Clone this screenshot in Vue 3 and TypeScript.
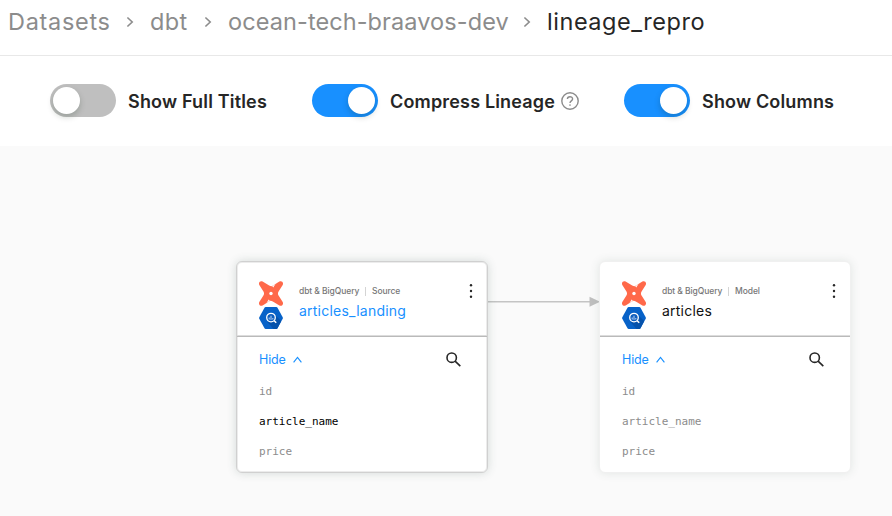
<script setup lang="ts">
import { ref } from 'vue'

interface LineageNode {
  id: string
  name: string
  kind: string
  x: number
  y: number
  selected: boolean
  active: string
}

const trail = ['Datasets', 'dbt', 'ocean-tech-braavos-dev']
const columns = ['id', 'article_name', 'price']

const options = ref([
  { key: 'full', label: 'Show Full Titles', on: false, help: false },
  { key: 'compress', label: 'Compress Lineage', on: true, help: true },
  { key: 'columns', label: 'Show Columns', on: true, help: false },
])

const nodes: LineageNode[] = [
  { id: 'landing', name: 'articles_landing', kind: 'Source', x: 236, y: 115, selected: true, active: 'article_name' },
  { id: 'articles', name: 'articles', kind: 'Model', x: 599, y: 115, selected: false, active: '' },
]
</script>

<template>
  <div class="page">
    <nav class="crumbs">
      <template v-for="(item, i) in trail" :key="item">
        <a :class="['crumb', 'crumb-' + i]">{{ item }}</a>
        <svg class="sep" width="8" height="12" viewBox="0 0 8 12"><path d="M1.4 1.5 6.2 6 1.4 10.5" /></svg>
      </template>
      <span class="crumb current">lineage_repro</span>
    </nav>

    <div class="controls">
      <div v-for="o in options" :key="o.key" :class="['option', o.key]">
        <button :class="['switch', { on: o.on }]" @click="o.on = !o.on"><span class="knob"></span></button>
        <span class="label">{{ o.label }}</span>
        <svg v-if="o.help" class="help" width="18" height="18" viewBox="0 0 18 18">
          <circle cx="9" cy="9" r="8.2" />
          <path d="M6.4 7.1C6.4 3.9 11.6 3.9 11.6 7c0 1.9-2.6 1.9-2.6 4" />
          <circle class="dot" cx="9" cy="13" r=".85" />
        </svg>
      </div>
    </div>

    <main class="canvas">
      <svg class="edges" width="892" height="370" viewBox="0 0 892 370">
        <path class="wire" d="M487 155.8H592" />
        <path class="arrow" d="M589.5 150.8 600 155.8 589.5 160.8Z" />
      </svg>

      <section
        v-for="n in nodes"
        :key="n.id"
        :class="['node', { selected: n.selected }]"
        :style="{ left: n.x + 'px', top: n.y + 'px' }"
      >
        <header class="head">
          <div class="logos">
            <svg width="24" height="25" viewBox="0 0 24 25">
              <path
                fill="#ff694a"
                d="M3.600.6 10.200 4.500Q12.600 5.700 14 4.600L20.400.6C22.900-.6 24.800 1.800 23.700 4L19.900 9.900Q18.300 12 19.400 14.200L23.700 21c1.100 2.200-.8 4.600-3.300 3.400L13.800 20.500Q11.400 19.300 10 20.400L3.600 24.400C1.100 25.600-.8 23.200.3 21L4.100 15.100Q5.700 13 4.600 10.800L.3 4C-.8 1.800 1.100-.6 3.600.6Z"
              />
              <path fill="#fff" d="M13.200 5.200 16.600 2.700 14.300 6.500ZM10.800 19.800 7.400 22.300 9.700 18.500Z" />
              <circle cx="12" cy="12.500" r="1.700" fill="#fff" />
            </svg>
            <svg width="24" height="22" viewBox="0 0 24 22">
              <path fill="#0762c8" d="M6.700 0h10.600q.8 0 1.200.7l5.200 9.500q.4.800 0 1.600l-5.200 9.500q-.4.700-1.200.7H6.700q-.8 0-1.200-.7L.3 11.800q-.4-.8 0-1.600L5.500.7Q5.900 0 6.700 0Z" />
              <path fill="#0552ab" d="m15.500 7.500 6.700 6.500-3.700 7.300q-.4.700-1.200.7h-2.800L8.500 15Z" />
              <circle cx="12" cy="10.600" r="4.300" fill="#0d5dbd" stroke="#fff" stroke-width="1.300" />
              <path d="m15.200 13.800 2 2" stroke="#fff" stroke-width="1.500" />
              <path d="M10.200 10.500v2M12 8.700v4.200M13.800 11v1.500" stroke="#b9d4f5" stroke-width="1" />
            </svg>
          </div>
          <div class="titles">
            <div class="meta">
              <span class="platform">dbt &amp; BigQuery</span>
              <i class="bar"></i>
              <span>{{ n.kind }}</span>
            </div>
            <div class="name">{{ n.name }}</div>
          </div>
          <svg class="more" width="4" height="16" viewBox="0 0 4 16">
            <circle cx="2" cy="2.300" r="1.200" /><circle cx="2" cy="8" r="1.200" /><circle cx="2" cy="13.700" r="1.200" />
          </svg>
        </header>
        <div class="tools">
          <a class="hide">Hide</a>
          <svg class="caret" width="9" height="7" viewBox="0 0 9 7"><path d="M.6 6.300 4.500 1.300 8.400 6.300" /></svg>
          <svg class="search" width="15" height="15" viewBox="0 0 15 15">
            <circle cx="5.700" cy="5.700" r="4.700" /><path d="m9.100 9.100 5.200 5" />
          </svg>
        </div>
        <ul class="cols">
          <li v-for="c in columns" :key="c" :class="{ active: c === n.active }">{{ c }}</li>
        </ul>
      </section>
    </main>
  </div>
</template>

<style>
body {
  background: #fff;
  overflow: hidden;
}
</style>

<style scoped>
.page {
  width: 892px;
  height: 516px;
  display: flex;
  flex-direction: column;
  overflow: hidden;
  background: #fff;
  color: #262626;
  font-family: Inter, 'Liberation Sans', sans-serif;
}
.crumbs {
  box-sizing: border-box;
  height: 56px;
  flex: none;
  display: flex;
  align-items: flex-start;
  padding: 6px 0 0 8px;
  border-bottom: 1px solid #e8e8e8;
  font-size: 23.500px;
  line-height: 32px;
  color: #8c8c8c;
  white-space: nowrap;
}
.crumb-0 {
  width: 102px;
  letter-spacing: 0.700px;
}
.crumb-1 {
  width: 38px;
  letter-spacing: 0.300px;
}
.crumb-2 {
  width: 279px;
  letter-spacing: 0.090px;
}
.current {
  color: #262626;
  letter-spacing: 0.540px;
}
.sep {
  flex: none;
  margin: 10px 16px 0;
}
.sep path {
  fill: none;
  stroke: #8c8c8c;
  stroke-width: 1.600;
}
.controls {
  box-sizing: border-box;
  height: 90px;
  flex: none;
  display: flex;
  align-items: flex-start;
  padding: 28px 0 0 50px;
}
.option {
  flex: none;
  display: flex;
  align-items: center;
  height: 33px;
  width: 262px;
  white-space: nowrap;
}
.option.compress { width: 312px; }
.option.columns { width: 240px; }
.switch {
  flex: none;
  display: flex;
  width: 66px;
  height: 33px;
  padding: 3px;
  border: 0;
  border-radius: 17px;
  background: #bfbfbf;
}
.switch.on {
  background: #1890ff;
  justify-content: flex-end;
}
.knob {
  width: 27px;
  height: 27px;
  border-radius: 50%;
  background: #fff;
  box-shadow: 0 3px 6px rgba(0, 35, 11, 0.2);
}
.label {
  margin-left: 12px;
  padding-top: 2px;
  font-size: 18px;
  font-weight: 600;
  line-height: 24px;
  letter-spacing: 0.170px;
}
.help {
  margin-left: 6px;
  fill: none;
  stroke: #8c8c8c;
  stroke-width: 1.400;
}
.help .dot {
  fill: #8c8c8c;
  stroke: none;
}
.canvas {
  position: relative;
  flex: 1;
  background: #fafafa;
}
.edges {
  position: absolute;
  left: 0;
  top: 0;
}
.wire {
  stroke: #c4c4c4;
  stroke-width: 1.500;
}
.arrow { fill: #bfbfbf; }
.node {
  position: absolute;
  box-sizing: border-box;
  width: 252px;
  height: 212px;
  border: 1px solid #f0f0f0;
  border-radius: 6px;
  background: #fff;
  box-shadow: 0 0 10px rgba(60, 90, 80, 0.13);
}
.node.selected {
  border-color: #d0d0d0;
  box-shadow: 0 0 10px rgba(60, 90, 80, 0.2), inset 0 0 0 1px #ececec;
}
.head {
  box-sizing: border-box;
  display: flex;
  height: 75px;
  padding: 19px 14px 0 22px;
  border-bottom: 1px solid #bababa;
  box-shadow: inset 0 -1px 0 #dcdcdc;
}
.logos {
  display: flex;
  flex-direction: column;
  gap: 1px;
  width: 40px;
}
.logos svg { display: block; }
.titles {
  flex: 1;
  white-space: nowrap;
}
.meta {
  display: flex;
  align-items: center;
  height: 12px;
  margin-top: 4px;
  font-size: 8.500px;
  font-weight: 500;
  line-height: 12px;
  letter-spacing: -0.080px;
  color: #777;
}
.platform { width: 66px; }
.bar {
  width: 1px;
  height: 9px;
  margin-right: 6px;
  background: #d4d4d4;
}
.name {
  margin-top: 4px;
  font-size: 14px;
  line-height: 20px;
  letter-spacing: 0.230px;
  color: #111;
}
.selected .name { color: #1890ff; }
.more {
  margin-top: 2px;
  fill: #262626;
}
.tools {
  display: flex;
  align-items: center;
  height: 43px;
  padding: 1px 26px 0 22px;
  box-sizing: border-box;
}
.hide {
  width: 34px;
  font-size: 12.500px;
  letter-spacing: -0.150px;
  color: #1890ff;
}
.caret path {
  fill: none;
  stroke: #1890ff;
  stroke-width: 1.100;
}
.search {
  margin-left: auto;
  fill: none;
  stroke: #262626;
  stroke-width: 1.600;
}
.cols {
  margin: 0;
  padding: 2px 0 0 22px;
  list-style: none;
  font-family: 'DejaVu Sans Mono', monospace;
  font-size: 11px;
  color: #8c8c8c;
}
.cols li {
  height: 30px;
  line-height: 20px;
}
.cols .active { color: #000; }
</style>
